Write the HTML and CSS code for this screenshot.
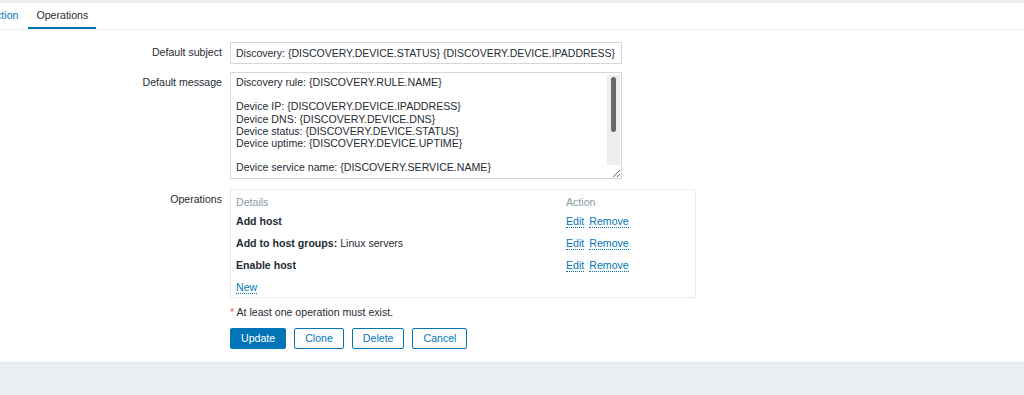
FILE: index.html
```html
<!DOCTYPE html>
<html>
<head>
<meta charset="utf-8">
<link rel="stylesheet" href="styles.css">
</head>
<body>
<div class="topstrip"></div>
<div class="tabs">
  <a class="tab">Action</a>
  <a class="tab active">Operations</a>
</div>
<div class="form">
  <div class="row">
    <label class="lbl">Default subject</label>
    <div class="field"><input class="input" type="text" value="Discovery: {DISCOVERY.DEVICE.STATUS} {DISCOVERY.DEVICE.IPADDRESS}"></div>
  </div>
  <div class="row ta-row">
    <label class="lbl">Default message</label>
    <div class="field ta-wrap"><textarea class="textarea">Discovery rule: {DISCOVERY.RULE.NAME}

Device IP: {DISCOVERY.DEVICE.IPADDRESS}
Device DNS: {DISCOVERY.DEVICE.DNS}
Device status: {DISCOVERY.DEVICE.STATUS}
Device uptime: {DISCOVERY.DEVICE.UPTIME}

Device service name: {DISCOVERY.SERVICE.NAME}</textarea><div class="sbar"><div class="sthumb"></div></div></div>
  </div>
  <div class="row">
    <label class="lbl">Operations</label>
    <div class="field">
      <div class="opbox">
        <table class="optable">
          <thead>
            <tr><th class="c-det">Details</th><th class="c-act">Action</th></tr>
          </thead>
          <tbody>
            <tr><td><b>Add host</b></td><td><a class="link">Edit</a><a class="link">Remove</a></td></tr>
            <tr><td><b>Add to host groups:</b> Linux servers</td><td><a class="link">Edit</a><a class="link">Remove</a></td></tr>
            <tr><td><b>Enable host</b></td><td><a class="link">Edit</a><a class="link">Remove</a></td></tr>
            <tr class="new-row"><td colspan="2"><a class="link">New</a></td></tr>
          </tbody>
        </table>
      </div>
    </div>
  </div>
  <div class="row note-row">
    <div class="lbl"></div>
    <div class="field note"><span class="ast">*</span> At least one operation must exist.</div>
  </div>
  <div class="row btn-row">
    <div class="lbl"></div>
    <div class="field buttons">
      <button class="btn primary">Update</button>
      <button class="btn">Clone</button>
      <button class="btn">Delete</button>
      <button class="btn">Cancel</button>
    </div>
  </div>
</div>
<div class="footer"></div>
</body>
</html>
```
FILE: styles.css
```css
html, body {
  margin: 0;
  padding: 0;
  background: #ffffff;
  font-family: "Liberation Sans", Arial, sans-serif;
  font-size: 10.6px;
  color: #1f2c33;
}
.topstrip {
  height: 3px;
  background: #ebeef0;
}
.tabs {
  display: flex;
  height: 26px;
  border-bottom: 1px solid #ebeef0;
  margin-left: -19px;
}
.tab {
  display: block;
  padding: 5px 8px 0;
  margin-right: 2px;
  line-height: 14px;
  color: #0275b8;
  border-bottom: 2px solid transparent;
  height: 19px;
}
.tab.active {
  color: #1f2c33;
  border-bottom-color: #0275b8;
}
.form {
  padding-top: 12px;
  padding-bottom: 13px;
}
.row {
  display: flex;
  margin-bottom: 8px;
}
.ta-row {
  margin-bottom: 10px;
}
.lbl {
  width: 222px;
  flex: none;
  text-align: right;
  padding-top: 4px;
  line-height: 13px;
  box-sizing: border-box;
}
.field {
  margin-left: 8px;
}
.input {
  display: block;
  width: 392px;
  height: 22px;
  box-sizing: border-box;
  border: 1px solid #d5d8da;
  padding: 0 4px 0 5px;
  font-family: inherit;
  font-size: 10.5px;
  color: #1f2c33;
  outline: none;
}
.ta-wrap {
  position: relative;
}
.textarea {
  display: block;
  width: 392px;
  height: 107px;
  box-sizing: border-box;
  border: 1px solid #d5d8da;
  padding: 3px 5px;
  font-family: inherit;
  font-size: 10.6px;
  line-height: 12.2px;
  color: #1f2c33;
  resize: both;
  overflow: hidden;
  outline: none;
}
.sbar {
  position: absolute;
  top: 3px;
  right: 2px;
  width: 13px;
  height: 90px;
  background: #eceeef;
}
.sthumb {
  margin: 2px auto 0;
  width: 5px;
  height: 55px;
  background: #6a6a6a;
  border-radius: 3px;
}
.opbox {
  width: 466px;
  box-sizing: border-box;
  border: 1px solid #ebeef0;
  padding: 6px 5px 3px;
}
.optable {
  border-collapse: collapse;
  width: 100%;
}
.optable th {
  text-align: left;
  font-weight: normal;
  color: #8a9aa3;
  padding: 0 0 3px;
  line-height: 13px;
}
.optable td {
  padding: 3px 0 6px;
  line-height: 13px;
  vertical-align: top;
}
.optable .new-row td {
  padding-bottom: 0;
}
.c-det { width: 330px; }
.link {
  color: #0275b8;
  text-decoration: none;
  border-bottom: 1px dotted #0275b8;
  margin-right: 5px;
}
.note-row {
  margin-top: 6px;
  margin-bottom: 9px;
}
.note {
  line-height: 13px;
}
.ast {
  color: #e45959;
}
.btn-row {
  margin-bottom: 0;
}
.buttons {
  display: flex;
  gap: 8px;
}
.btn {
  height: 21px;
  box-sizing: border-box;
  padding: 0 10px;
  background: #ffffff;
  border: 1px solid #0275b8;
  border-radius: 2px;
  color: #0275b8;
  font-family: inherit;
  font-size: 10.6px;
  line-height: 19px;
}
.btn.primary {
  background: #0275b8;
  color: #ffffff;
}
.footer {
  border-top: 1px solid #dfe4e7;
  background: #ebeef0;
  height: 40px;
}
```
